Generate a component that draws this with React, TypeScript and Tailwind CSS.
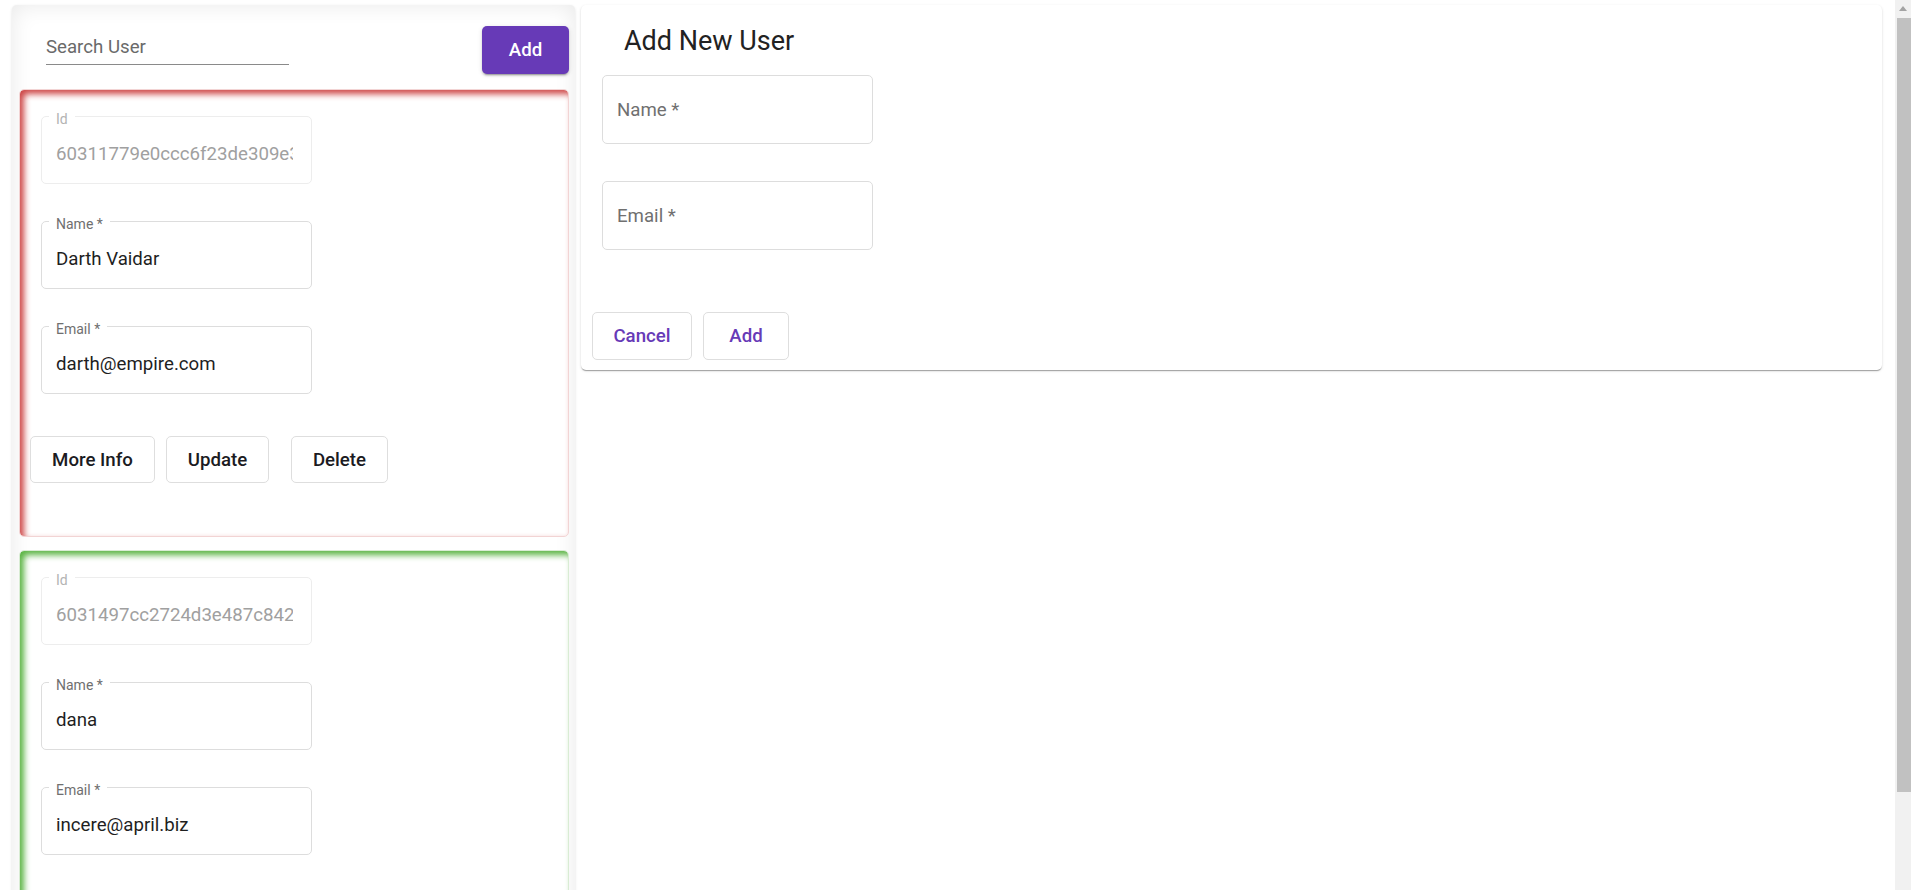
import React from "react";

const font = { fontFamily: "Roboto, 'Noto Sans', Arial, sans-serif" };

function CardField({ label, value, disabled }: { label: string; value: string; disabled?: boolean }) {
  return (
    <div
      className={`relative h-[68px] w-[271px] rounded-[5px] border ${
        disabled ? "border-[#ededed]" : "border-[#dddddd]"
      }`}
    >
      <span
        className={`absolute left-[7px] top-[-6px] bg-white px-[7px] text-[14px] leading-[16px] ${
          disabled ? "text-[#b3b3b3]" : "text-[#6f6f6f]"
        }`}
      >
        {label}
      </span>
      <div className="pl-[14px] pt-[25px] pb-[17px]">
        <div
          className={`w-[237px] overflow-hidden whitespace-nowrap text-[18.67px] leading-[24px] ${
            disabled ? "text-[#a0a0a0]" : "text-[#1f1f1f]"
          }`}
        >
          {value}
        </div>
      </div>
    </div>
  );
}

function UserCard({
  id,
  name,
  email,
  tone,
  actions,
}: {
  id: string;
  name: string;
  email: string;
  tone: "red" | "green";
  actions?: boolean;
}) {
  const toneCls =
    tone === "red"
      ? "border-[#f2d4d4] shadow-[inset_4px_4px_6px_rgba(200,50,50,0.9)]"
      : "border-[#d9ecd4] shadow-[inset_4px_4px_6px_rgba(80,175,55,0.95)]";
  return (
    <div className={`rounded-[5px] border bg-white pt-[26px] ${actions ? "pb-[53px]" : "pb-[160px]"} ${toneCls}`}>
      <div className="flex flex-col gap-[37px] pl-[21px]">
        <CardField label="Id" value={id} disabled />
        <CardField label="Name *" value={name} />
        <CardField label="Email *" value={email} />
      </div>
      {actions && (
        <div className="mt-[42px] flex items-center pl-[10px] text-[18.67px] font-medium text-[#1b1b22]">
          <button className="h-[47px] w-[125px] rounded-[5px] border border-[#dedede] bg-white">More Info</button>
          <button className="ml-[11px] h-[47px] w-[103px] rounded-[5px] border border-[#dedede] bg-white">Update</button>
          <button className="ml-[22px] h-[47px] w-[97px] rounded-[5px] border border-[#dedede] bg-white">Delete</button>
        </div>
      )}
    </div>
  );
}

function FormField({ label }: { label: string }) {
  return (
    <div className="flex h-[69px] w-[271px] items-center rounded-[5px] border border-[#dddddd] px-[14px]">
      <span className="text-[18.67px] leading-[24px] text-[#707070]">{label}</span>
    </div>
  );
}

export default function App() {
  return (
    <div className="flex h-[890px] w-full overflow-hidden bg-white" style={font}>
      <div className="flex flex-1 items-start gap-[6px] pl-[12px] pt-[5px]">
        {/* Left panel */}
        <div className="w-[563px] shrink-0 rounded-[5px] bg-white pb-[20px] pl-[7px] pr-[6px] shadow-[inset_0_0_22px_rgba(0,0,0,0.09),0_1px_3px_rgba(0,0,0,0.12)]">
          <div className="flex items-start justify-between pt-[21px]">
            <div className="ml-[27px] mt-[9px] w-[243px] border-b border-[#8a8a8a] pb-[5px]">
              <span className="block text-[18.67px] leading-[24px] text-[#6a6a6a]">Search User</span>
            </div>
            <button className="h-[48px] w-[87px] rounded-[5px] bg-[#673ab7] text-[18.67px] font-medium text-white shadow-[0_3px_1px_-2px_rgba(0,0,0,0.2),0_2px_2px_0_rgba(0,0,0,0.14),0_1px_5px_0_rgba(0,0,0,0.12)]">
              Add
            </button>
          </div>
          <div className="mt-[15px] flex flex-col gap-[13px]">
            <UserCard id="60311779e0ccc6f23de309e3" name="Darth Vaidar" email="darth@empire.com" tone="red" actions />
            <UserCard id="6031497cc2724d3e487c8429" name="dana" email="incere@april.biz" tone="green" />
          </div>
        </div>

        {/* Right card */}
        <div className="h-[365px] w-[1301px] shrink-0 rounded-[5px] bg-white pt-[20px] shadow-[0_2px_1px_-1px_rgba(0,0,0,0.2),0_1px_1px_0_rgba(0,0,0,0.14),0_1px_3px_0_rgba(0,0,0,0.12)]">
          <h2 className="pl-[43px] text-[27px] leading-[32px] font-normal text-[#222222]">Add New User</h2>
          <div className="mt-[18px] flex flex-col gap-[37px] pl-[21px]">
            <FormField label="Name *" />
            <FormField label="Email *" />
          </div>
          <div className="mt-[62px] flex items-center gap-[11px] pl-[11px] text-[18.67px] font-medium text-[#673ab7]">
            <button className="h-[48px] w-[100px] rounded-[5px] border border-[#dedede] bg-white">Cancel</button>
            <button className="h-[48px] w-[86px] rounded-[5px] border border-[#dedede] bg-white">Add</button>
          </div>
        </div>
      </div>

      {/* Scrollbar */}
      <div className="flex w-[16px] shrink-0 flex-col bg-[#f1f1f1]">
        <div className="flex h-[17px] items-center justify-center">
          <div className="h-0 w-0 border-b-[5px] border-l-[4px] border-r-[4px] border-b-[#a3a3a3] border-l-transparent border-r-transparent" />
        </div>
        <div className="ml-[2px] mt-[1px] h-[774px] bg-[#c1c1c1]" />
      </div>
    </div>
  );
}
